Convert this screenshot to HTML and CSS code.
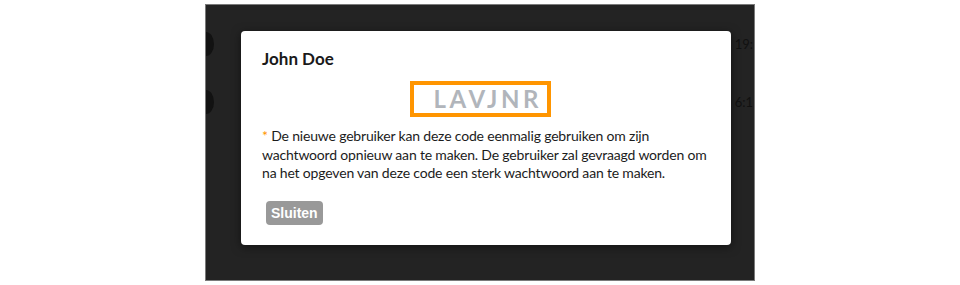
FILE: index.html
```html
<!DOCTYPE html>
<html lang="nl">
<head>
    <meta charset="UTF-8">
    <title>Gebruiker code</title>
    <link rel="stylesheet" href="styles.css">
</head>
<body>

    <div id="backdrop">
        <!-- rows of the page behind the dialog -->
        <div class="bg-row first">
            <span class="avatar"></span>
            <span class="time">19:</span>
        </div>
        <div class="bg-row">
            <span class="avatar"></span>
            <span class="time">6:1</span>
        </div>

        <!-- Dialog -->
        <div id="dialog">
            <h2>John Doe</h2>
            <div class="code-wrap">
                <span class="code">LAVJNR</span>
            </div>
            <p class="note"><span class="star">*</span> De nieuwe gebruiker kan deze code eenmalig gebruiken om zijn<br>
                wachtwoord opnieuw aan te maken. De gebruiker zal gevraagd worden om<br>
                na het opgeven van deze code een sterk wachtwoord aan te maken.</p>
            <button type="button">Sluiten</button>
        </div>
    </div>

</body>
</html>
```

FILE: styles.css
```css
/* General styling */
body {
    margin: 0;
    padding: 0;
    background-color: #fff;
    font-family: Lato, "Open Sans", sans-serif;
}

/* Dark overlay over the page */
#backdrop {
    position: relative;
    box-sizing: border-box;
    width: 550px;
    height: 277px;
    margin: 4px 0 0 205px;
    background-color: #232323;
    border: 1px solid #7a7a7a;
    overflow: hidden;
}

.bg-row {
    display: flex;
    justify-content: space-between;
    align-items: center;
    height: 58px;
}

.bg-row.first {
    margin-top: 10px;
}

.avatar {
    width: 16px;
    height: 24px;
    margin-left: -8px;
    border-radius: 50%;
    background-color: #121212;
}

.time {
    font-size: 13px;
    color: #111;
    margin-right: 1px;
}

/* Dialog */
#dialog {
    position: absolute;
    top: 26px;
    left: 35px;
    box-sizing: border-box;
    width: 490px;
    height: 214px;
    padding: 18px 21px 0 21px;
    background-color: #fff;
    border-radius: 4px;
    box-shadow: 0 2px 10px rgba(0, 0, 0, 0.5);
}

#dialog h2 {
    margin: 0;
    font-size: 17px;
    line-height: 20px;
    font-weight: bold;
    color: #1a1a1a;
}

.code-wrap {
    display: flex;
    justify-content: center;
    margin-top: 12px;
    padding-right: 12px;
}

.code {
    display: inline-block;
    box-sizing: border-box;
    width: 141px;
    height: 36px;
    padding-left: 20px;
    border: 4px solid #ff9500;
    font-size: 24px;
    line-height: 28px;
    font-weight: bold;
    letter-spacing: 3.6px;
    color: #b1b5bb;
}

.note {
    margin: 10px -12px 0 0;
    font-size: 14px;
    line-height: 18.5px;
    letter-spacing: -0.18px;
    white-space: nowrap;
    color: #1c1c1c;
}

.star {
    color: #ff9500;
}

button {
    margin: 18px 0 0 4px;
    padding: 0 5px;
    height: 24px;
    border: none;
    border-radius: 4px;
    background-color: #999;
    color: #fff;
    font-family: "Liberation Sans", Arial, sans-serif;
    font-size: 14px;
    font-weight: bold;
    cursor: pointer;
}
```
